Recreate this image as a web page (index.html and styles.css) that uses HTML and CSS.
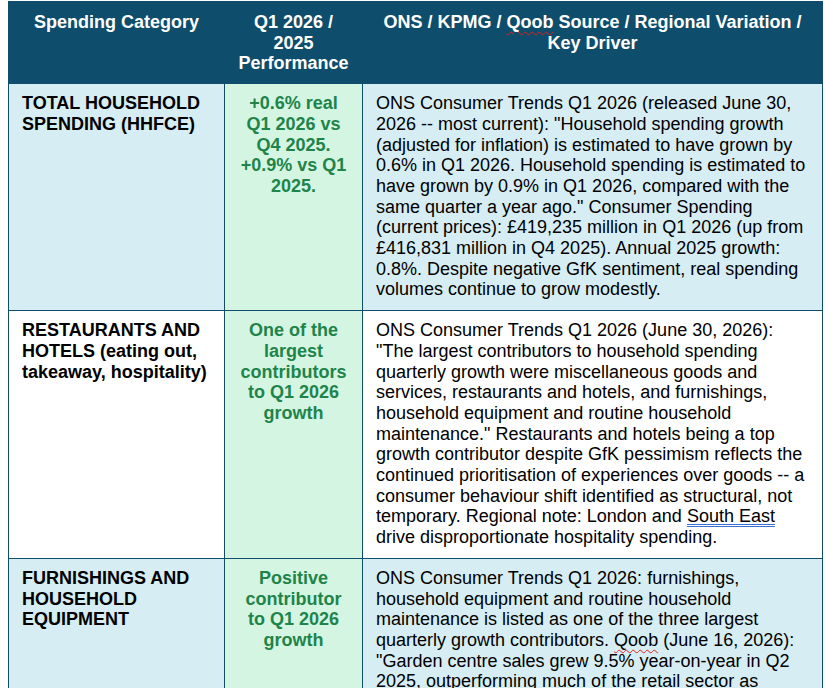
FILE: index.html
```html
<!DOCTYPE html>
<html lang="en-GB">
<head>
    <meta charset="UTF-8">
    <title>UK Consumer Spending Q1 2026</title>
    <link rel="stylesheet" href="styles.css">
</head>
<body>

<table class="spending">
    <colgroup>
        <col class="col-cat">
        <col class="col-perf">
        <col class="col-src">
    </colgroup>
    <thead>
        <tr>
            <th>Spending Category</th>
            <th>Q1 2026 / 2025 Performance</th>
            <th>ONS / KPMG / <span class="spell">Qoob</span> Source / Regional Variation / Key Driver</th>
        </tr>
    </thead>
    <tbody>
        <tr class="shaded">
            <td class="cat">TOTAL HOUSEHOLD SPENDING (HHFCE)</td>
            <td class="perf">+0.6% real Q1 2026 vs Q4 2025. +0.9% vs Q1 2025.</td>
            <td>ONS Consumer Trends Q1 2026 (released June 30, 2026 -- most current): "Household spending growth (adjusted for inflation) is estimated to have grown by 0.6% in Q1 2026. Household spending is estimated to have grown by 0.9% in Q1 2026, compared with the same quarter a year ago." Consumer Spending (current prices): £419,235 million in Q1 2026 (up from £416,831 million in Q4 2025). Annual 2025 growth: 0.8%. Despite negative GfK sentiment, real spending volumes continue to grow modestly.</td>
        </tr>
        <tr>
            <td class="cat">RESTAURANTS AND HOTELS (eating out, takeaway, hospitality)</td>
            <td class="perf">One of the largest contributors to Q1 2026 growth</td>
            <td>ONS Consumer Trends Q1 2026 (June 30, 2026): "The largest contributors to household spending quarterly growth were miscellaneous goods and services, restaurants and hotels, and furnishings, household equipment and routine household maintenance." Restaurants and hotels being a top growth contributor despite GfK pessimism reflects the continued prioritisation of experiences over goods -- a consumer behaviour shift identified as structural, not temporary. Regional note: London and <span class="grammar">South East</span> drive disproportionate hospitality spending.</td>
        </tr>
        <tr class="shaded">
            <td class="cat">FURNISHINGS AND HOUSEHOLD EQUIPMENT</td>
            <td class="perf">Positive contributor to Q1 2026 growth</td>
            <td>ONS Consumer Trends Q1 2026: furnishings, household equipment and routine household maintenance is listed as one of the three largest quarterly growth contributors. <span class="spell">Qoob</span> (June 16, 2026): "Garden centre sales grew 9.5% year-on-year in Q2 2025, outperforming much of the retail sector as households continued to invest in their homes and gardens."</td>
        </tr>
    </tbody>
</table>

</body>
</html>
```

FILE: styles.css
```css
body {
    margin: 0 0 0 8px;
    padding-top: 1px;
    background-color: #ffffff;
    font-family: "Liberation Sans", Arial, sans-serif;
    font-size: 18px;
    color: #000000;
}
.spending {
    border-collapse: collapse;
    table-layout: fixed;
    width: 814px;
}
.col-cat {
    width: 216px;
}
.col-perf {
    width: 138px;
}
.col-src {
    width: 460px;
}
.spending th,
.spending td {
    border: 1px solid #0e4d6b;
    padding: 9px 13px 10px;
    vertical-align: top;
    line-height: 20.7px;
    text-align: left;
}
.spending th {
    padding: 10px 13px 9px;
    background-color: #0e4d6b; /* header band */
    color: #ffffff;
    font-weight: bold;
    text-align: center;
}
.spending td {
    background-color: #ffffff;
}
.spending tr.shaded td {
    background-color: #d7edf4; /* light blue rows */
}
.spending td.cat {
    font-weight: bold;
}
.spending td.perf,
.spending tr.shaded td.perf {
    background-color: #d5f5e3; /* green performance column */
    color: #1e8449;
    font-weight: bold;
    text-align: center;
}
.spell {
    text-decoration: underline wavy #e02020;
    text-decoration-thickness: 1px;
    text-underline-offset: 3px;
}
.grammar {
    text-decoration: underline double #3b6fd6;
    text-decoration-thickness: 1px;
    text-underline-offset: 2px;
}
```
